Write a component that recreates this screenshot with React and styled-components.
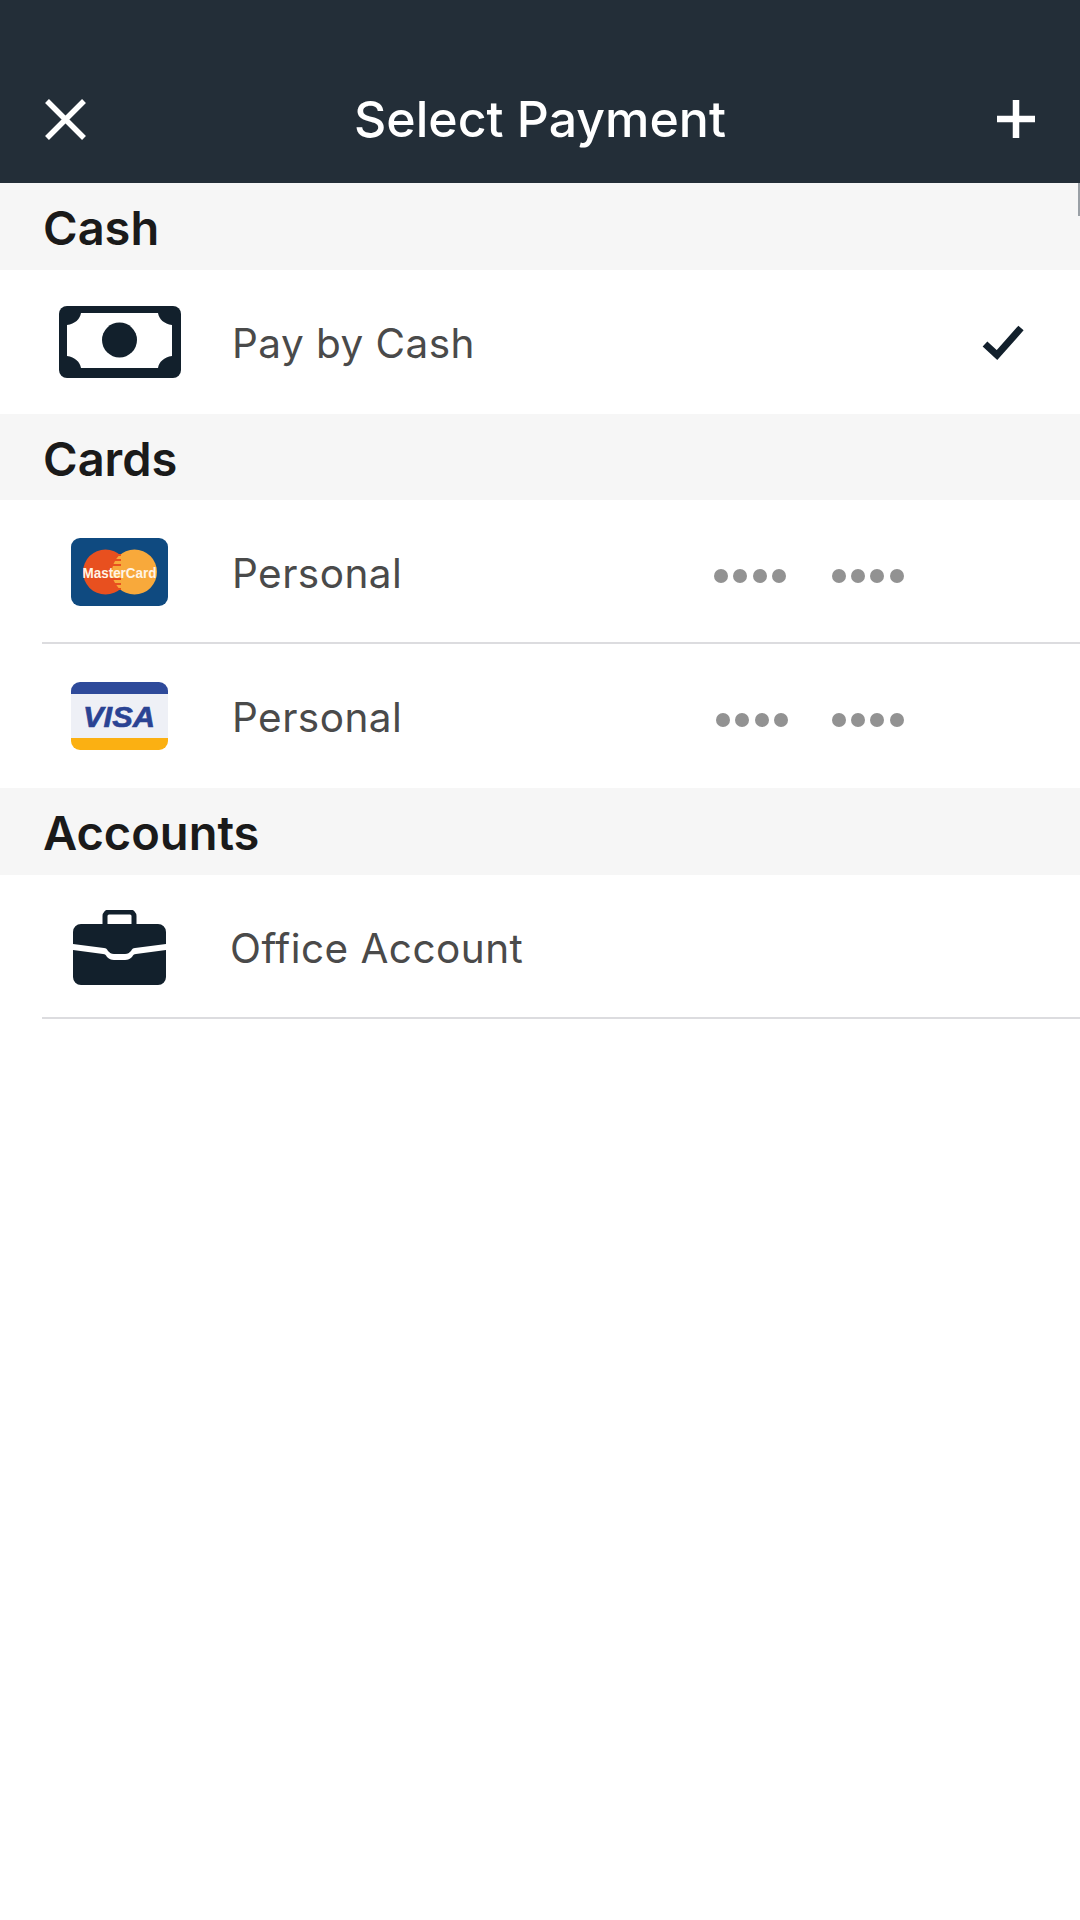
import React from "react";
import styled, { createGlobalStyle } from "styled-components";

const Global = createGlobalStyle`
  html, body { margin: 0; padding: 0; background: #fff; }
  body { font-family: Inter, "Noto Sans", sans-serif; }
`;

const Page = styled.div`
  width: 1080px;
  height: 1920px;
  background: #fff;
  overflow: hidden;
`;

const Header = styled.header`
  box-sizing: border-box;
  height: 183px;
  padding: 55px 45px 0 45px;
  background: #232e38;
  display: grid;
  grid-template-columns: 1fr auto 1fr;
  align-items: center;
`;

const Title = styled.h1`
  margin: 0;
  color: #fff;
  font-size: 50px;
  font-weight: 500;
`;

const CloseIcon = styled.svg`
  display: block;
  width: 41px;
  height: 41px;
`;

const PlusIcon = styled.svg`
  display: block;
  width: 38px;
  height: 38px;
  justify-self: end;
`;

const SectionHeader = styled.h2`
  box-sizing: border-box;
  position: relative;
  margin: 0;
  height: ${(p) => p.$height || 87}px;
  padding: 2px 0 0 43px;
  background: #f6f6f6;
  color: #1a1a1a;
  font-size: 47px;
  font-weight: 600;
  display: flex;
  align-items: center;

  &::after {
    content: "";
    display: ${(p) => (p.$edgeMark ? "block" : "none")};
    position: absolute;
    top: 0;
    right: 0;
    width: 2px;
    height: 33px;
    background: #9aa0a6;
  }
`;

const Row = styled.div`
  box-sizing: border-box;
  height: 144px;
  margin-left: 42px;
  display: flex;
  align-items: center;
  padding-top: ${(p) => (p.$divided ? 2 : 0)}px;
  border-bottom: ${(p) => (p.$divided ? "2px solid #dcdcdf" : "none")};
`;

const IconSlot = styled.div`
  width: 155px;
  flex: none;
  display: flex;
  justify-content: center;
`;

const Label = styled.span`
  width: 482px;
  flex: none;
  margin-top: 2px;
  margin-left: ${(p) => p.$offset || 35}px;
  color: #4a4a4a;
  font-size: 40.5px;
  font-weight: 400;
  letter-spacing: 0.45px;
`;

const Dots = styled.div`
  display: flex;
  gap: 5.3px;
  margin-top: 8px;
  margin-left: ${(p) => p.$offset || 0}px;
`;

const Dot = styled.i`
  display: block;
  width: 14px;
  height: 14px;
  border-radius: 50%;
  background: #929292;
`;

const Check = styled.svg`
  display: block;
  margin-left: auto;
  margin-right: 56px;
  width: 42px;
  height: 36px;
`;

const DotGroup = ({ offset }) => (
  <Dots $offset={offset}>
    <Dot />
    <Dot />
    <Dot />
    <Dot />
  </Dots>
);

const CashIcon = () => (
  <svg width="122" height="72" viewBox="0 0 122 72">
    <rect width="122" height="72" rx="8" fill="#12202c" />
    <path
      d="M22 7H99C100 13 105 18 113 19V50C105 51 100 56 99 62H22C21 56 16 51 8 50V19C16 18 21 13 22 7Z"
      fill="#fff"
    />
    <circle cx="60.5" cy="34" r="17.5" fill="#12202c" />
  </svg>
);

const MasterCardIcon = () => (
  <svg width="97" height="68" viewBox="0 0 97 68">
    <rect width="97" height="68" rx="9" fill="#0f4a80" />
    <circle cx="34.5" cy="34" r="22.5" fill="#e8501f" />
    <circle cx="63.5" cy="34" r="22.5" fill="#f8a93b" />
    <path d="M44 17h6M42 22h8M41 27h9M41 41h9M42 46h8M44 51h6" stroke="#e8501f" strokeWidth="2" />
    <text
      x="48.5"
      y="39.5"
      textAnchor="middle"
      fontFamily="Liberation Sans, sans-serif"
      fontWeight="700"
      fontSize="15.5"
      textLength="74"
      lengthAdjust="spacingAndGlyphs"
      fill="#fff4e6"
    >
      MasterCard
    </text>
  </svg>
);

const VisaIcon = () => (
  <svg width="97" height="68" viewBox="0 0 97 68">
    <path d="M0 12V9a9 9 0 0 1 9-9h79a9 9 0 0 1 9 9v3Z" fill="#2e4a9a" />
    <rect y="12" width="97" height="44" fill="#eef0f6" />
    <path d="M0 56H97V59a9 9 0 0 1-9 9H9a9 9 0 0 1-9-9Z" fill="#fbb012" />
    <text
      x="48"
      y="45"
      textAnchor="middle"
      fontFamily="Liberation Sans, sans-serif"
      fontWeight="700"
      fontStyle="italic"
      fontSize="29"
      textLength="72"
      lengthAdjust="spacingAndGlyphs"
      fill="#2a4393"
      stroke="#2a4393"
      strokeWidth="0.6"
    >
      VISA
    </text>
  </svg>
);

const BriefcaseIcon = () => (
  <svg width="93" height="75" viewBox="0 0 93 75">
    <path d="M32 14V6a4 4 0 0 1 4-4h21a4 4 0 0 1 4 4v8" fill="none" stroke="#12202c" strokeWidth="5" />
    <path
      d="M8 14H85a8 8 0 0 1 8 8V34L62 38C60 38 59 39 58 41 56 43 55 44 52 44H41C38 44 37 43 35 41 34 39 33 38 31 38L0 34V22a8 8 0 0 1 8-8Z"
      fill="#12202c"
    />
    <path
      d="M0 40L30 44C32 44 33 45 34 47 36 49 38 50 41 50H52C55 50 57 49 59 47 60 45 61 44 63 44L93 40V67a8 8 0 0 1-8 8H8a8 8 0 0 1-8-8Z"
      fill="#12202c"
    />
  </svg>
);

export default function App() {
  return (
    <Page>
      <Global />
      <Header>
        <CloseIcon viewBox="0 0 41 41">
          <path d="M2 2L39 39M39 2L2 39" stroke="#fff" strokeWidth="5.5" fill="none" />
        </CloseIcon>
        <Title>Select Payment</Title>
        <PlusIcon viewBox="0 0 38 38">
          <path d="M19 0V38M0 19H38" stroke="#fff" strokeWidth="6.5" fill="none" />
        </PlusIcon>
      </Header>

      <SectionHeader $edgeMark>Cash</SectionHeader>
      <Row>
        <IconSlot>
          <CashIcon />
        </IconSlot>
        <Label>Pay by Cash</Label>
        <Check viewBox="0 0 42 36">
          <path d="M3 20L15 31L39 4" stroke="#12202c" strokeWidth="7" fill="none" />
        </Check>
      </Row>

      <SectionHeader $height={86}>Cards</SectionHeader>
      <Row $divided>
        <IconSlot>
          <MasterCardIcon />
        </IconSlot>
        <Label>Personal</Label>
        <DotGroup />
        <DotGroup offset={46} />
      </Row>
      <Row>
        <IconSlot>
          <VisaIcon />
        </IconSlot>
        <Label>Personal</Label>
        <DotGroup offset={2} />
        <DotGroup offset={44} />
      </Row>

      <SectionHeader>Accounts</SectionHeader>
      <Row $divided>
        <IconSlot>
          <BriefcaseIcon />
        </IconSlot>
        <Label $offset={33}>Office Account</Label>
      </Row>
    </Page>
  );
}
